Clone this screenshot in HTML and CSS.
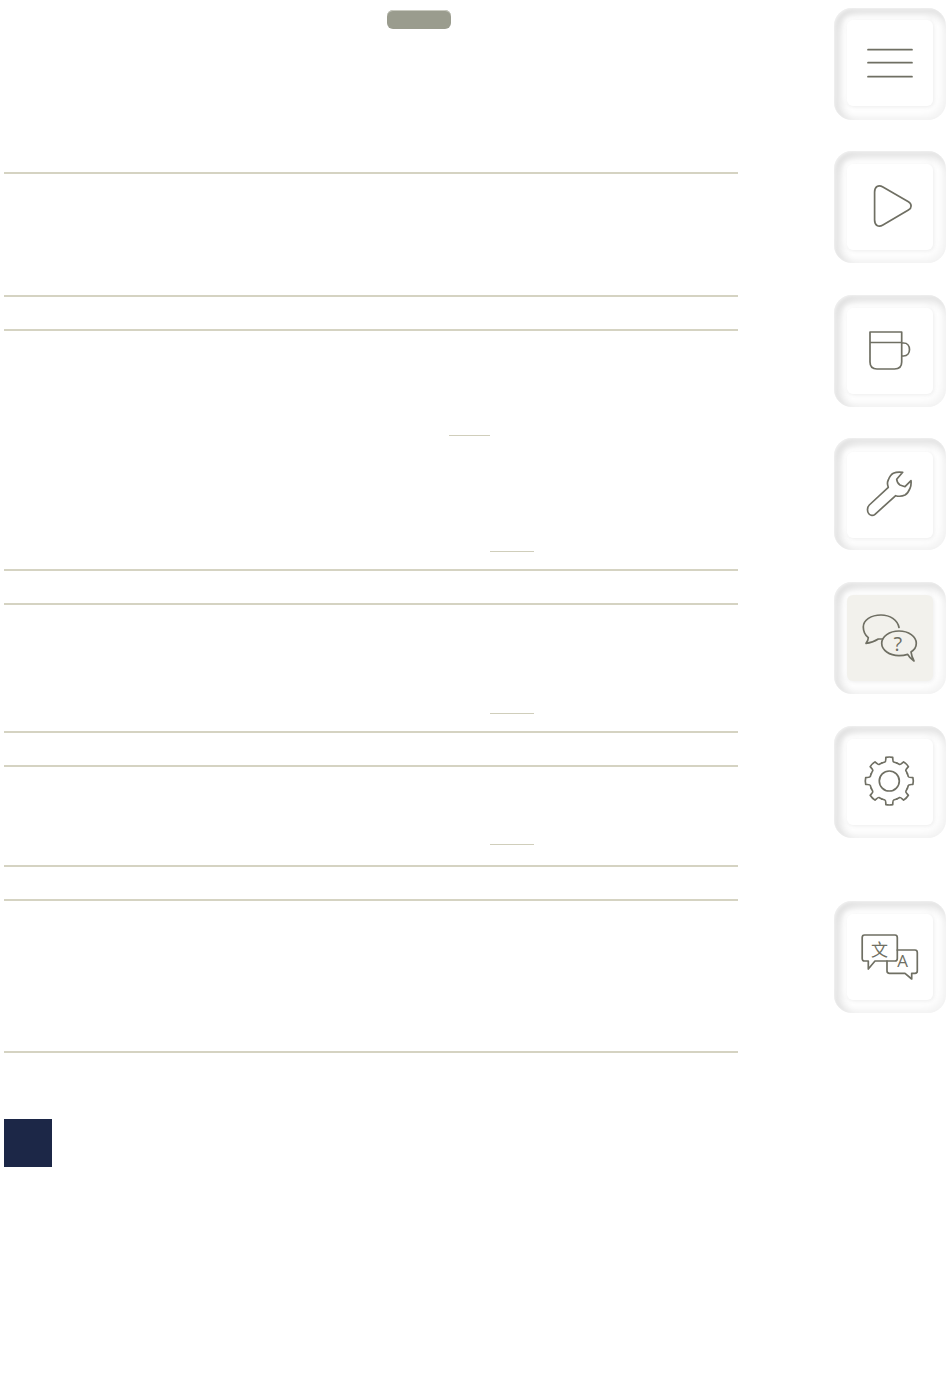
FILE: index.html
```html
<!DOCTYPE html>
<html lang="en">
<head>
<meta charset="utf-8">
<title>Menu</title>
<link rel="stylesheet" href="styles.css">
</head>
<body>
<div class="page">
  <main class="content">
    <div class="pill"></div>
    <section class="block block-a"></section>
    <section class="block block-b">
      <div class="link-rule rule-short"></div>
      <div class="link-rule rule-long rule-b2"></div>
    </section>
    <section class="block block-c">
      <div class="link-rule rule-long rule-c1"></div>
    </section>
    <section class="block block-d">
      <div class="link-rule rule-long rule-d1"></div>
    </section>
    <section class="block block-e"></section>
    <div class="square"></div>
  </main>
  <nav class="rail">
    <button class="key key-first" type="button"><span class="cap">
      <svg class="icon" viewBox="0 0 86 86"><path d="M21 29.7H65M21 42.7H65M21 56.7H65"/></svg>
    </span></button>
    <button class="key key-near" type="button"><span class="cap">
      <svg class="icon" viewBox="0 0 86 86"><path d="M27.6 28C27.6 22.6 31.4 20.4 35.9 23L61.4 37.8C65 39.9 65 44 61.4 46.1L35.9 61C31.4 63.5 27.6 61.3 27.6 56Z"/></svg>
    </span></button>
    <button class="key" type="button"><span class="cap">
      <svg class="icon" viewBox="0 0 86 86"><path d="M23 24H54.7V54C54.7 58.5 51.8 61 47.5 61H30C25.8 61 23 58.5 23 54ZM23 34.5H54.7M54.7 35H56.5C60.5 35 62.5 38 62.5 41.5C62.5 45 60.5 48 56.5 48H54.7"/></svg>
    </span></button>
    <button class="key key-near key-low" type="button"><span class="cap">
      <svg class="icon" viewBox="0 0 86 86"><path d="M22.3 53L41.3 35.3C40.2 32.5 40.2 30 41.3 28C42.6 24.6 44 22.5 46.3 21.3C49 20 52.5 19.8 55.7 20.3L49.7 27.3C49.9 29.6 51 31.8 53 33L58 34.7L64 28.7C64.3 31.5 64 34 63 36.3C61.6 39.6 60 41.8 58 43C55 44.5 52 44.6 48.7 43.7L28 62.3C26 64.1 23.4 63.6 21.8 61.8C20.2 60 19.8 55.4 22.3 53Z"/></svg>
    </span></button>
    <button class="key" type="button"><span class="cap cap-active">
      <svg class="icon" viewBox="0 0 86 86">
        <path d="M52 32.5C50.5 24.8 43 20 34 20C24 20 16.3 25 16.3 32C16.3 36.5 18 40 21.3 42.7C21.2 44.8 20.5 46.6 19 48.3C23.6 48 27.5 46.5 31.3 44L35.5 44"/>
        <path d="M34.7 48.3C34.7 41.5 42.4 36 52 36C61.6 36 69.3 41.5 69.3 48.3C69.3 52 67.3 55 64 56.9C64.4 60 65.3 63 67 66C64 64 62 62 60.7 59.4C58 60.2 55 60.6 52 60.6C42.4 60.6 34.7 55.1 34.7 48.3Z"/>
        <text class="glyph glyph-q" x="50.7" y="55.5">?</text>
      </svg>
    </span></button>
    <button class="key" type="button"><span class="cap">
      <svg class="icon" viewBox="0 0 86 86">
        <g transform="translate(42.3 42)">
          <circle r="10"/>
          <path id="tooth" d="M-7.46 -18.02Q-5.8 -18.6 -4.39 -19C-3.4 -19.3 -3.6 -21 -3.41 -23.6Q0 -24.4 3.41 -23.6C3.6 -21 3.4 -19.3 4.39 -19Q5.8 -18.6 7.46 -18.02"/>
          <use href="#tooth" transform="rotate(45)"/>
          <use href="#tooth" transform="rotate(90)"/>
          <use href="#tooth" transform="rotate(135)"/>
          <use href="#tooth" transform="rotate(180)"/>
          <use href="#tooth" transform="rotate(225)"/>
          <use href="#tooth" transform="rotate(270)"/>
          <use href="#tooth" transform="rotate(315)"/>
        </g>
      </svg>
    </span></button>
    <button class="key key-far" type="button"><span class="cap">
      <svg class="icon" viewBox="0 0 86 86">
        <path d="M17.5 21H48C49.5 21 50.3 22 50.3 23.5V44.5C50.3 46 49.5 47 48 47H28L21.3 55V47H17.5C16 47 15.2 46 15.2 44.5V23.5C15.2 22 16 21 17.5 21Z"/>
        <path d="M50.3 36H68C69.5 36 70.3 37 70.3 38.5V57C70.3 58.5 69.5 59.3 68 59.3H64.7V65L58 59.3H42.5C41 59.3 40 58.5 40 57V47"/>
        <text class="glyph glyph-zh" x="32.6" y="42">文</text>
        <text class="glyph glyph-a" x="55.7" y="53">A</text>
      </svg>
    </span></button>
  </nav>
</div>
</body>
</html>
```
FILE: styles.css
```css
* {
  box-sizing: border-box;
}

html,
body {
  margin: 0;
  height: 100%;
  background: #fff;
}

.page {
  display: flex;
  align-items: flex-start;
  width: 950px;
  height: 1387px;
  overflow: hidden;
}

.content {
  width: 734px;
  margin-left: 4px;
  padding-top: 10px;
}

.pill {
  width: 64px;
  height: 19px;
  margin-left: 383px;
  margin-bottom: 143px;
  border-radius: 6px;
  background: #9a9c8e;
  box-shadow: inset 0 1px 0 #c9cac0;
}

.block {
  display: flex;
  flex-direction: column;
  border-top: 2px solid #d5d3c2;
  border-bottom: 2px solid #d5d3c2;
  margin-bottom: 32px;
}

.block-a { height: 125px; }
.block-b { height: 242px; }
.block-c { height: 130px; }
.block-d { height: 102px; }
.block-e { height: 154px; margin-bottom: 66px; }

.link-rule {
  height: 1px;
  background: #d0cebb;
}

.rule-short {
  width: 41px;
  margin: 104px 0 0 445px;
}

.rule-long {
  width: 44px;
  margin-left: 486px;
}

.rule-b2 { margin-top: 115px; }
.rule-c1 { margin-top: 108px; }
.rule-d1 { margin-top: 77px; }

.square {
  width: 48px;
  height: 48px;
  background: #1c2747;
}

.rail {
  display: flex;
  flex-direction: column;
  width: 112px;
  margin-left: 96px;
  padding-top: 8px;
}

.key {
  display: flex;
  align-items: center;
  justify-content: center;
  flex: none;
  width: 112px;
  height: 112px;
  margin-top: 32px;
  padding: 0 1px 1px 0;
  border: 0;
  border-radius: 18px;
  background: #fff;
  box-shadow:
    inset 1px 1px 3px rgba(255, 255, 255, 0.6),
    inset 7px 7px 11px rgba(0, 0, 0, 0.12),
    inset -4px -4px 8px rgba(0, 0, 0, 0.05);
}

.key-first {
  margin-top: 0;
  padding-bottom: 2px;
}

.key-near { margin-top: 31px; }
.key-far { margin-top: 63px; }

.key-low {
  padding-top: 2px;
}

.cap {
  display: block;
  flex: none;
  width: 86px;
  height: 86px;
  border-radius: 6px;
  background: #fff;
  box-shadow:
    1px 1px 4px rgba(0, 0, 0, 0.08),
    -3px -3px 5px #fff;
}

.cap-active {
  background: #f2f1ec;
}

.icon {
  display: block;
  width: 86px;
  height: 86px;
  fill: none;
  stroke: #6f6f63;
  stroke-width: 1.7;
  stroke-linejoin: round;
  stroke-linecap: round;
}

.glyph {
  fill: #6f6f63;
  stroke: none;
  text-anchor: middle;
}

.glyph-q {
  font: 400 20px "Open Sans", sans-serif;
}

.glyph-zh {
  font: 400 17px "Noto Sans CJK SC", sans-serif;
}

.glyph-a {
  font: 400 17px "Open Sans", sans-serif;
}
```
